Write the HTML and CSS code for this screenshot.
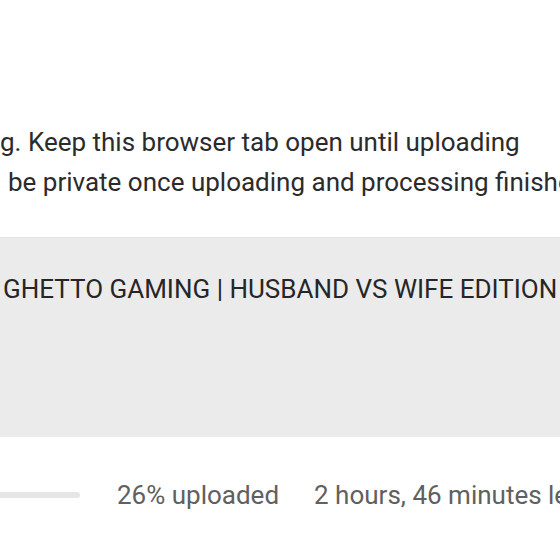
FILE: index.html
```html
<!DOCTYPE html>
<html lang="en">
<head>
<meta charset="utf-8">
<title>Upload</title>
<link rel="stylesheet" href="styles.css">
</head>
<body>
<div class="page">
  <div class="notice">
    <p class="line">g. Keep this browser tab open until uploading</p>
    <p class="line line-2">be private once uploading and processing finishes.</p>
  </div>
  <div class="card">
    <div class="title">GHETTO GAMING | HUSBAND VS WIFE EDITION</div>
  </div>
  <div class="status">
    <div class="bar"><div class="fill"></div></div>
    <span class="pct">26% uploaded</span>
    <span class="left">2 hours, 46 minutes left</span>
  </div>
</div>
</body>
</html>
```

FILE: styles.css
```css
html, body {
  margin: 0;
  padding: 0;
  background: #ffffff;
  overflow: hidden;
}
.page {
  width: 560px;
  height: 560px;
  overflow: hidden;
  font-family: Roboto, "Liberation Sans", sans-serif;
  font-size: 26px;
}
.notice {
  padding-top: 122px;
  color: #2b2b2b;
}
.line {
  margin: 0;
  line-height: 40px;
  white-space: nowrap;
}
.line-2 {
  padding-left: 8px;
}
.card {
  margin-top: 35px;
  height: 200px;
  background: #ebebeb;
  border-top: 1px solid #e4e4e4;
  box-sizing: border-box;
  padding-top: 37px;
}
.title {
  line-height: 28px;
  white-space: nowrap;
  color: #262626;
  padding-left: 3px;
}
.status {
  margin-top: 44px;
  display: flex;
  align-items: center;
  line-height: 28px;
  white-space: nowrap;
  color: #606060;
}
.bar {
  width: 80px;
  height: 6px;
  margin-right: 37px;
  border-radius: 0 3px 3px 0;
  background: #e6e6e6;
  flex: none;
}
.pct {
  margin-right: 35px;
}
```
